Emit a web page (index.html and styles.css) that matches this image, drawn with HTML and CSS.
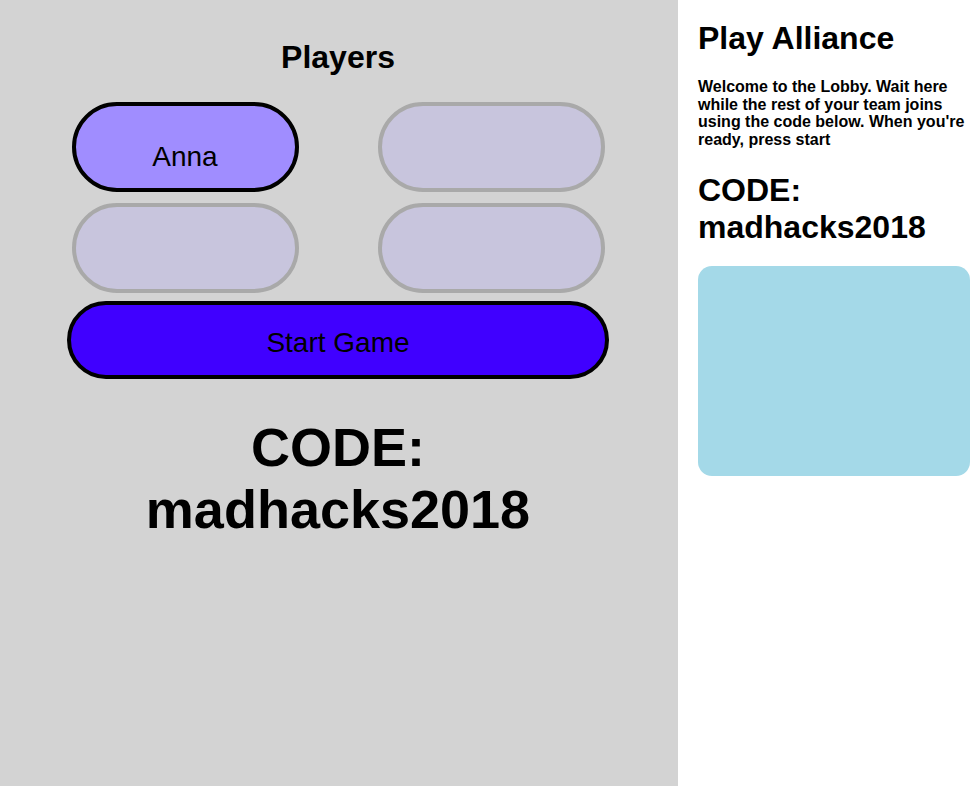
FILE: index.html
```html
<!DOCTYPE html>
<html lang="en">
<head>
    <meta charset="UTF-8">
    <meta name="viewport" content="width=device-width, initial-scale=1.0">
    <title>Play Alliance - Lobby</title>
    <link rel="stylesheet" href="styles.css">
</head>
<body>

<div class="page">
    <div class="lobby-panel">
        <div class="lobby">
            <h1 class="players-title">Players</h1>

            <div class="player-grid">
                <div class="player-slot joined">Anna</div>
                <div class="player-slot"></div>
                <div class="player-slot"></div>
                <div class="player-slot"></div>
            </div>

            <button class="start-button">Start Game</button>

            <h1 class="big-code">CODE:<br>madhacks2018</h1>
        </div>
    </div>

    <div class="side-panel">
        <h1 class="brand">Play Alliance</h1>
        <p class="intro">Welcome to the Lobby. Wait here while the rest of your team joins using the code below. When you're ready, press start</p>
        <h1 class="side-code">CODE:<br>madhacks2018</h1>
        <div class="chat-box"></div>
    </div>
</div>

</body>
</html>
```

FILE: styles.css
```css
/* Basic styling */
* { box-sizing: border-box; }
body { margin: 0; font-family: "Liberation Sans", Arial, Helvetica, sans-serif; color: #000; }
.page { display: flex; min-height: 100vh; }

/* Left: lobby */
.lobby-panel { width: 678px; background: #d3d3d3; padding-top: 39px; }
.lobby { width: 542px; margin-left: 67px; text-align: center; }
.players-title { margin: 0; font-size: 32px; line-height: 37px; }

/* Player slots */
.player-grid { display: grid; grid-template-columns: 227px 227px; justify-content: center; column-gap: 79px; row-gap: 11px; margin-top: 26px; }
.player-slot { height: 90px; border: 4px solid #a9a9a9; border-radius: 45px; background: #c8c5dd; padding-top: 35px; font-size: 28px; line-height: 32px; }
.player-slot.joined { border-color: #000; background: #a08dff; }

/* Start */
.start-button { display: block; width: 542px; height: 78px; margin-top: 8px; padding: 6px 0 0; border: 4px solid #000; border-radius: 39px; background: #4000ff; color: #000; font-family: inherit; font-size: 28px; line-height: 32px; }

.big-code { margin: 37px 0 0; font-size: 54px; line-height: 62px; }

/* Right: side panel */
.side-panel { width: 298px; padding: 0 6px 0 20px; background: #fff; }
.brand { margin: 20px 0 21px; font-size: 32px; line-height: 37px; }
.intro { margin: 0 0 24px; font-size: 16px; font-weight: bold; line-height: 17.6px; }
.side-code { margin: 0 0 20px; font-size: 32px; line-height: 37px; }
.chat-box { height: 210px; border-radius: 14px; background: #a4d9e8; }
```
